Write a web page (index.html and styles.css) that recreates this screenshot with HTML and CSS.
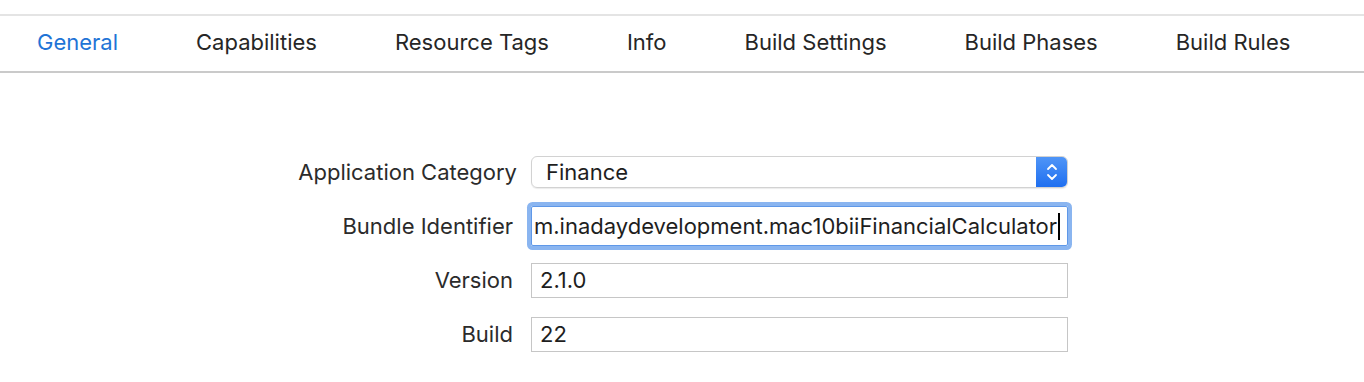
FILE: index.html
```html
<!DOCTYPE html>
<html lang="en">
<head>
    <meta charset="UTF-8">
    <title>General</title>
    <link rel="stylesheet" href="styles.css">
</head>
<body>
    <nav class="tabs">
        <a href="#general" class="tab active">General</a>
        <a href="#capabilities" class="tab">Capabilities</a>
        <a href="#resource-tags" class="tab">Resource Tags</a>
        <a href="#info" class="tab">Info</a>
        <a href="#build-settings" class="tab">Build Settings</a>
        <a href="#build-phases" class="tab">Build Phases</a>
        <a href="#build-rules" class="tab">Build Rules</a>
    </nav>

    <main class="identity">
        <div class="row">
            <label class="label label-select">Application Category</label>
            <div class="select">
                <span class="select-value">Finance</span>
                <span class="stepper">
                    <svg width="14" height="22" viewBox="0 0 14 22">
                        <path d="M3 8 L7 4 L11 8" fill="none" stroke="#fff" stroke-width="1.8" stroke-linecap="round" stroke-linejoin="round"/>
                        <path d="M3 14 L7 18 L11 14" fill="none" stroke="#fff" stroke-width="1.8" stroke-linecap="round" stroke-linejoin="round"/>
                    </svg>
                </span>
            </div>
        </div>
        <div class="row">
            <label class="label">Bundle Identifier</label>
            <div class="field focused">
                <span class="field-text">m.inadaydevelopment.mac10biiFinancialCalculator</span><span class="caret"></span>
            </div>
        </div>
        <div class="row">
            <label class="label">Version</label>
            <div class="field"><span class="field-text">2.1.0</span></div>
        </div>
        <div class="row">
            <label class="label">Build</label>
            <div class="field"><span class="field-text">22</span></div>
        </div>
    </main>
</body>
</html>
```

FILE: styles.css
```css
body {
    font-family: 'Inter', 'Roboto', sans-serif;
    margin: 0;
    padding: 0;
    background-color: #ffffff;
    color: #262626;
}
.tabs {
    display: flex;
    align-items: center;
    gap: 78px;
    margin-top: 14px;
    height: 52px;
    padding-left: 37px;
    padding-bottom: 3px;
    box-sizing: content-box;
    border-top: 2px solid #e4e4e4;
    border-bottom: 2px solid #cacaca;
}
.tab {
    font-size: 22px;
    color: #262626;
    text-decoration: none;
}
.tab.active {
    color: #1f74d6;
}
.identity {
    padding-top: 72px;
}
.row {
    display: grid;
    grid-template-columns: 513px 537px;
    column-gap: 18px;
    align-items: center;
    height: 54px;
}
.label {
    font-size: 22px;
    color: #2b2b2b;
    text-align: right;
}
.label-select {
    margin-right: -4px;
}
.select {
    display: flex;
    align-items: center;
    height: 32px;
    border: 1px solid #d2d2d2;
    border-radius: 6px;
    box-shadow: 0 1px 1px rgba(0, 0, 0, 0.08);
    box-sizing: border-box;
    overflow: hidden;
}
.select-value {
    flex: 1;
    font-size: 22px;
    padding-left: 14px;
    color: #1e1e1e;
}
.stepper {
    width: 31px;
    height: 100%;
    display: flex;
    align-items: center;
    justify-content: center;
    background: linear-gradient(#4f95f7, #1f6ff0);
}
.field {
    display: flex;
    align-items: center;
    height: 35px;
    border: 1px solid #c6c6c6;
    box-sizing: border-box;
    overflow: hidden;
}
.field.focused {
    height: 40px;
    border-color: #5f98e8;
    border-radius: 2px;
    box-shadow: 0 0 0 4px #8ab5f0;
}
.field-text {
    font-size: 22px;
    color: #1e1e1e;
    padding-left: 8px;
    white-space: nowrap;
}
.focused .field-text {
    padding-left: 2px;
}
.caret {
    display: inline-block;
    width: 2px;
    height: 27px;
    background-color: #000;
    margin-left: 1px;
}
```
